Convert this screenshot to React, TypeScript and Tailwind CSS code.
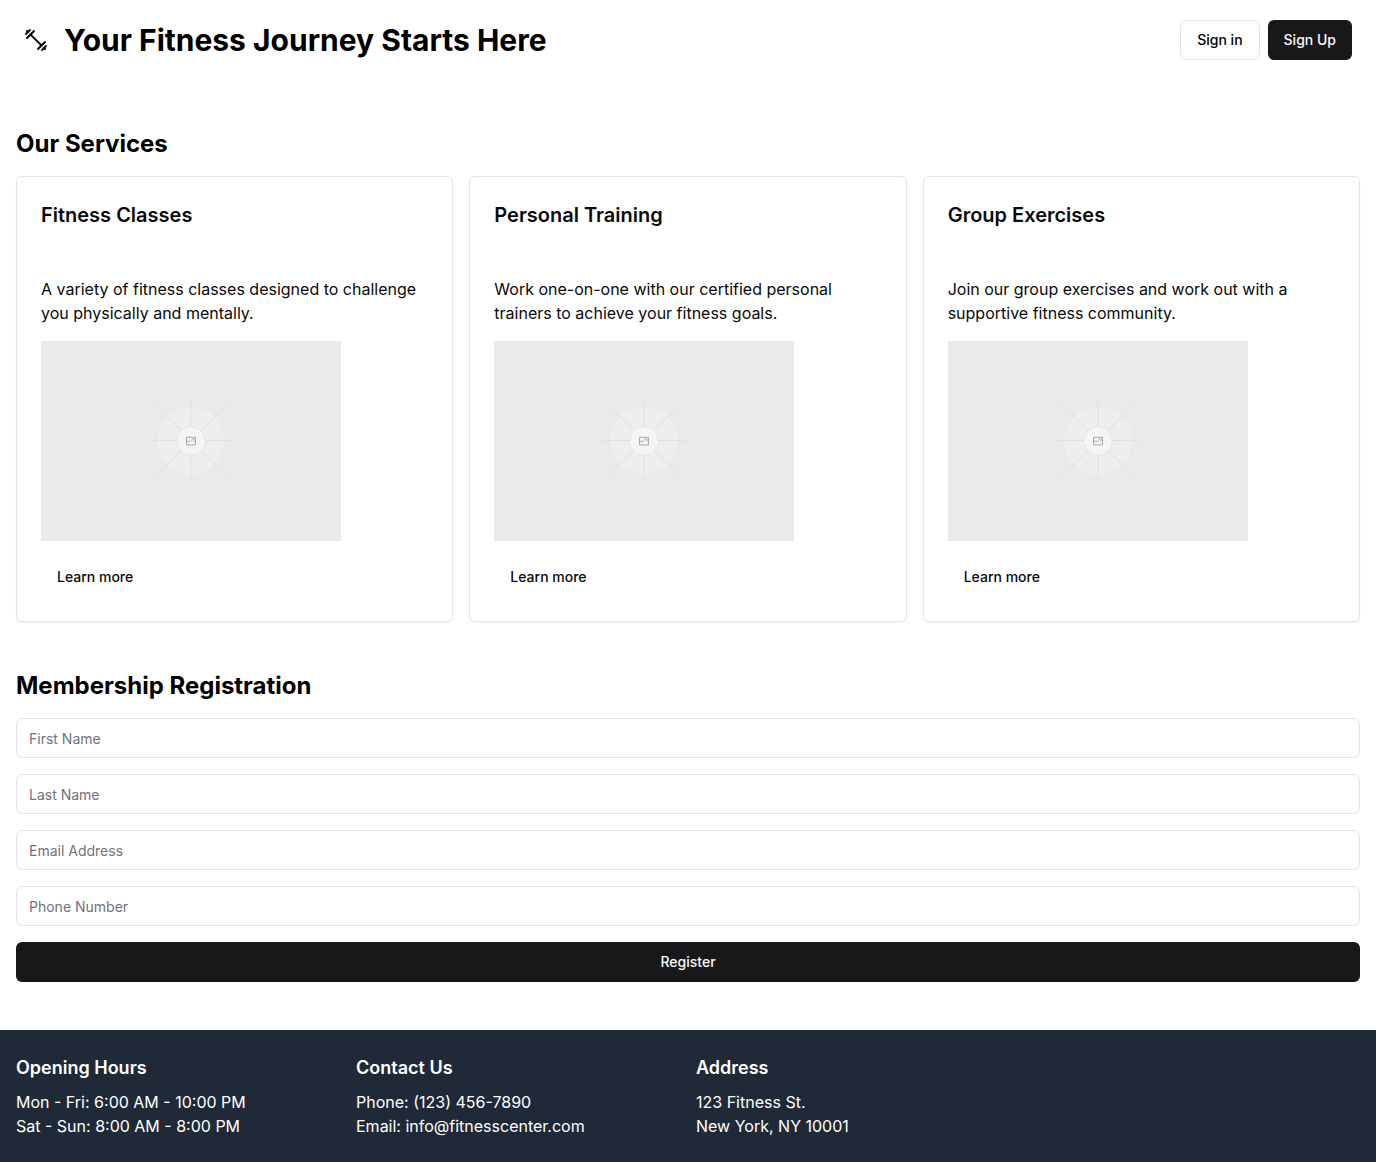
import React from "react";

const services = [
  {
    title: "Fitness Classes",
    text: "A variety of fitness classes designed to challenge you physically and mentally.",
  },
  {
    title: "Personal Training",
    text: "Work one-on-one with our certified personal trainers to achieve your fitness goals.",
  },
  {
    title: "Group Exercises",
    text: "Join our group exercises and work out with a supportive fitness community.",
  },
];

const fields = [
  { label: "First Name", type: "text" },
  { label: "Last Name", type: "text" },
  { label: "Email Address", type: "email" },
  { label: "Phone Number", type: "tel" },
];

const contacts = [
  { title: "Opening Hours", lines: ["Mon - Fri: 6:00 AM - 10:00 PM", "Sat - Sun: 8:00 AM - 8:00 PM"] },
  { title: "Contact Us", lines: ["Phone: (123) 456-7890", "Email: info@fitnesscenter.com"] },
  { title: "Address", lines: ["123 Fitness St.", "New York, NY 10001"] },
];

function DumbbellIcon() {
  return (
    <svg
      className="size-6 shrink-0"
      viewBox="0 0 24 24"
      fill="none"
      stroke="currentColor"
      strokeWidth="2"
      strokeLinecap="round"
      strokeLinejoin="round"
      aria-hidden="true"
    >
      <path d="m6.5 6.5 11 11" />
      <path d="m21 21-1-1" />
      <path d="m3 3 1 1" />
      <path d="m18 22 4-4" />
      <path d="m2 6 4-4" />
      <path d="m3 10 7-7" />
      <path d="m14 21 7-7" />
    </svg>
  );
}

function Placeholder({ id, label }: { id: string; label: string }) {
  return (
    <svg className="mt-4 h-[200px] w-[300px] max-w-full" viewBox="0 0 300 200" role="img" aria-label={label}>
      <defs>
        <radialGradient id={id} gradientUnits="userSpaceOnUse" cx="150" cy="100" r="54">
          <stop offset="0.3" stopColor="#d8d8d8" />
          <stop offset="0.65" stopColor="#dedede" />
          <stop offset="0.9" stopColor="#dedede" stopOpacity="0" />
        </radialGradient>
        <radialGradient id={`${id}-diagonal`} gradientUnits="userSpaceOnUse" cx="150" cy="100" r="64">
          <stop offset="0.3" stopColor="#d8d8d8" />
          <stop offset="0.7" stopColor="#dcdcdc" />
          <stop offset="0.95" stopColor="#dcdcdc" stopOpacity="0" />
        </radialGradient>
      </defs>
      <rect width="300" height="200" fill="#eaeaea" />
      <circle cx="150" cy="99.5" r="34.5" fill="#eeeeee" stroke="#e7e7e7" strokeWidth="0.5" />
      <g stroke={`url(#${id})`} strokeWidth="0.8" fill="none">
        <path d="M102 99.6 L198 99.4" />
        <path d="M149.9 52 L150.1 148" />
      </g>
      <g stroke={`url(#${id}-diagonal)`} strokeWidth="0.8" fill="none">
        <path d="M108 57.5 L192 141.5" />
        <path d="M108 141.5 L192 57.5" />
      </g>
      <circle cx="150" cy="100" r="14.3" fill="#f5f5f5" stroke="#dedede" strokeWidth="0.6" />
      <g fill="none" stroke="#a0a0a0" strokeWidth="0.9">
        <path d="M145.5 96.3h9v7.6h-9z" />
        <path d="M145.6 100.3h2.2q1.6.9 2.3-.7c.7-2 2.9-1.9 2.9.1v.9" />
        <path d="M152.5 97.8h1.2" />
      </g>
    </svg>
  );
}

export default function App() {
  return (
    <div className="bg-white font-['Inter',sans-serif] text-base text-black">
      <header className="flex h-20 items-center justify-between px-6">
        <div className="flex items-center gap-4">
          <DumbbellIcon />
          <h1 className="text-3xl font-bold">Your Fitness Journey Starts Here</h1>
        </div>
        <div className="flex gap-2">
          <button type="button" className="h-10 rounded-md border border-zinc-200 px-4 text-sm font-medium">
            Sign in
          </button>
          <button type="button" className="h-10 rounded-md bg-[#18181b] px-4 text-sm font-medium text-zinc-50">
            Sign Up
          </button>
        </div>
      </header>

      <main className="flex flex-col gap-12 px-4 py-12">
        <section>
          <h2 className="mb-4 text-2xl font-bold">Our Services</h2>
          <div className="grid grid-cols-1 gap-4 md:grid-cols-3">
            {services.map((service, i) => (
              <article key={service.title} className="rounded-md border border-zinc-200 text-zinc-950 shadow-xs">
                <div className="p-6">
                  <h3 className="text-xl font-semibold">{service.title}</h3>
                </div>
                <div className="p-6">
                  <p>{service.text}</p>
                  <Placeholder id={`rays-${i}`} label={service.title} />
                  <button type="button" className="mt-4 h-10 rounded-md px-4 text-sm font-medium">
                    Learn more
                  </button>
                </div>
              </article>
            ))}
          </div>
        </section>

        <section>
          <h2 className="mb-4 text-2xl font-bold">Membership Registration</h2>
          <form className="flex flex-col gap-4">
            {fields.map((field) => (
              <input
                key={field.label}
                type={field.type}
                aria-label={field.label}
                placeholder={field.label}
                className="h-10 w-full rounded-md border border-zinc-200 px-3 py-2 text-sm placeholder:text-[#71717a]"
              />
            ))}
            <button type="button" className="h-10 rounded-md bg-[#18181b] px-4 text-sm font-medium text-zinc-50">
              Register
            </button>
          </form>
        </section>
      </main>

      <footer className="grid grid-cols-1 gap-4 bg-[#1f2937] px-4 py-6 text-white md:grid-cols-4">
        {contacts.map((contact) => (
          <div key={contact.title}>
            <h3 className="mb-2 text-lg font-semibold">{contact.title}</h3>
            {contact.lines.map((line) => (
              <p key={line}>{line}</p>
            ))}
          </div>
        ))}
      </footer>
    </div>
  );
}
